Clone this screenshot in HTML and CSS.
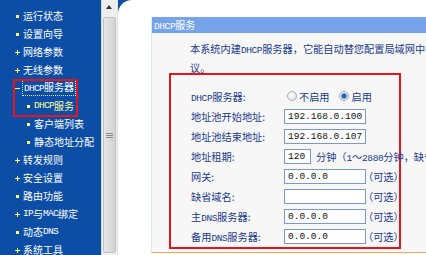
FILE: index.html
```html
<!DOCTYPE html>
<html lang="zh-CN">
  <head>
    <meta charset="UTF-8" />
    <meta name="viewport" content="width=device-width, initial-scale=1.0" />
    <title>DHCP服务</title>
    <link rel="stylesheet" href="styles.css">
  </head>
  <body>
    <div class="frame">
      <!-- Left menu -->
      <nav class="menu">
        <a class="item" href="#"><i class="ic dot"></i>运行状态</a>
        <a class="item" href="#"><i class="ic dot"></i>设置向导</a>
        <a class="item" href="#"><i class="ic plus"></i>网络参数</a>
        <a class="item" href="#"><i class="ic plus"></i>无线参数</a>
        <div class="hl">
          <a class="item" href="#"><i class="ic minus"></i><span class="focus"><span class="en">DHCP</span>服务器</span></a>
          <a class="item sub current" href="#"><i class="ic dot"></i><span class="en">DHCP</span>服务</a>
        </div>
        <a class="item sub" href="#"><i class="ic dot"></i>客户端列表</a>
        <a class="item sub" href="#"><i class="ic dot"></i>静态地址分配</a>
        <a class="item" href="#"><i class="ic plus"></i>转发规则</a>
        <a class="item" href="#"><i class="ic plus"></i>安全设置</a>
        <a class="item" href="#"><i class="ic dot"></i>路由功能</a>
        <a class="item" href="#"><i class="ic plus"></i><span class="en">IP</span>与<span class="en">MAC</span>绑定</a>
        <a class="item" href="#"><i class="ic dot"></i>动态<span class="en">DNS</span></a>
        <a class="item" href="#"><i class="ic plus"></i>系统工具</a>
      </nav>

      <div class="scrollbar">
        <div class="sb-up"></div>
        <div class="sb-thumb"><span class="grip"></span></div>
      </div>

      <!-- Main content -->
      <div class="main">
        <div class="page">
          <div class="panel">
            <div class="panel-title"><span class="en">DHCP</span>服务</div>
            <div class="panel-body">
              <p class="intro">本系统内建<span class="en">DHCP</span>服务器，它能自动替您配置局域网中各计算机的<span class="en">TCP/IP</span>协<br>议。</p>

              <div class="form-box">
                <div class="row">
                  <label class="label"><span class="en">DHCP</span>服务器:</label>
                  <span class="radio"></span><span class="opt">不启用</span>
                  <span class="radio checked"></span><span class="opt">启用</span>
                </div>
                <div class="row">
                  <label class="label">地址池开始地址:</label>
                  <span class="input">192.168.0.100</span>
                </div>
                <div class="row">
                  <label class="label">地址池结束地址:</label>
                  <span class="input">192.168.0.107</span>
                </div>
                <div class="row">
                  <label class="label">地址租期:</label>
                  <span class="input short">120</span>
                  <span class="hint">分钟（<span class="en">1</span>～<span class="en">2880</span>分钟，缺省值为<span class="en">120</span>分钟）</span>
                </div>
                <div class="row">
                  <label class="label">网关:</label>
                  <span class="input">0.0.0.0</span>
                  <span class="note">（可选）</span>
                </div>
                <div class="row">
                  <label class="label">缺省域名:</label>
                  <span class="input"></span>
                  <span class="note">（可选）</span>
                </div>
                <div class="row">
                  <label class="label">主<span class="en">DNS</span>服务器:</label>
                  <span class="input">0.0.0.0</span>
                  <span class="note">（可选）</span>
                </div>
                <div class="row">
                  <label class="label">备用<span class="en">DNS</span>服务器:</label>
                  <span class="input">0.0.0.0</span>
                  <span class="note">（可选）</span>
                </div>
              </div>
            </div>
          </div>
        </div>
      </div>
    </div>
  </body>
</html>
```

FILE: styles.css
```css
:root {
  --menu-blue: #0c4ea6;
  --text-navy: #1a3a8a;
  --mark: #ffff66;
  --red: #e8141c;
}

* {
  margin: 0;
  padding: 0;
  box-sizing: border-box;
}

body {
  font-family: "Noto Sans CJK SC", "Noto Sans", sans-serif;
  overflow: hidden;
  background: white;
}

.frame {
  display: flex;
  width: 426px;
  height: 255px;
  overflow: hidden;
}

/* Latin runs use a narrow monospace face, like the bitmap font */
.en {
  font-family: "Liberation Mono", monospace;
  font-size: 9.5px;
  letter-spacing: -0.4px;
}

/* Menu */
.menu {
  width: 101px;
  flex-shrink: 0;
  background: var(--menu-blue);
  padding-top: 7px;
}

.item {
  display: flex;
  align-items: center;
  height: 18px;
  color: white;
  font-size: 10px;
  line-height: 18px;
  text-decoration: none;
  white-space: nowrap;
}

.menu .en {
  font-size: 9.5px;
  letter-spacing: -0.7px;
}

.item.current {
  color: #ffff99;
}

.ic {
  width: 5px;
  height: 5px;
  margin: 0 3px 0 15px;
  flex-shrink: 0;
}

.sub .ic {
  margin-left: 26px;
}

.ic.dot {
  background: radial-gradient(circle, var(--mark) 1.6px, transparent 1.8px);
}

.ic.plus {
  background:
    linear-gradient(var(--mark), var(--mark)) center / 5px 1px no-repeat,
    linear-gradient(var(--mark), var(--mark)) center / 1px 5px no-repeat;
}

.ic.minus {
  background: linear-gradient(var(--mark), var(--mark)) center / 5px 1px no-repeat;
}

.focus {
  outline: 1px dotted #d8e4ff;
  outline-offset: 0;
  line-height: 12px;
  padding: 0 1px;
}

.hl {
  position: relative;
}

.hl::after {
  content: "";
  position: absolute;
  left: 13px;
  top: 0;
  width: 61px;
  height: 34px;
  border: 2px solid var(--red);
}

/* Scrollbar */
.scrollbar {
  width: 17px;
  flex-shrink: 0;
  display: flex;
  flex-direction: column;
  background: #eeeeee;
  border-left: 1px solid #d6d6d6;
  border-right: 1px solid #e4e4e4;
}

.sb-up {
  height: 16px;
  position: relative;
}

.sb-up::before {
  content: "";
  position: absolute;
  left: 4px;
  top: 5px;
  border-left: 3px solid transparent;
  border-right: 3px solid transparent;
  border-bottom: 4px solid #333;
}

.sb-thumb {
  flex: 1;
  margin: 1px 1px 2px;
  background: linear-gradient(to right, #e6e6e6, #d2d2d2);
  border: 1px solid #c2c2c2;
  border-radius: 2px;
  display: flex;
  align-items: center;
  justify-content: center;
}

.grip {
  width: 7px;
  height: 5px;
  background: repeating-linear-gradient(#8a8a8a 0 1px, transparent 1px 2px);
}

/* Main area */
.main {
  flex: 1;
  background: var(--menu-blue);
  overflow: hidden;
}

.page {
  height: 100%;
  background: white;
  border-top-left-radius: 14px;
  padding: 17px 0 0 33px;
}

.panel {
  width: 420px;
  background: #f7f7f7;
  border-left: 1px solid #e2e6ee;
  border-bottom: 1px solid #f3a65a;
}

.panel-title {
  height: 16px;
  line-height: 16px;
  background: #77a3ea;
  color: white;
  font-size: 10px;
  padding-left: 2px;
}

.panel-body {
  padding: 7px 0 3px 17px;
  color: var(--text-navy);
  font-size: 10.2px;
}

.intro {
  line-height: 17px;
  padding-left: 21px;
  white-space: nowrap;
}

.form-box {
  width: 232px;
  margin-top: -3px;
  border: 2px solid var(--red);
  padding: 11px 0 1px 20px;
  white-space: nowrap;
}

.row {
  display: flex;
  align-items: center;
  height: 20px;
}

.label {
  width: 93px;
  flex-shrink: 0;
}

.radio {
  width: 10px;
  height: 10px;
  border-radius: 50%;
  margin: 0 1px 0 3px;
  border: 1px solid #a4acb8;
  background: radial-gradient(circle at 40% 35%, #ffffff, #d8dce2);
  flex-shrink: 0;
}

.radio.checked {
  margin-left: 9px;
  background:
    radial-gradient(circle, #2a60c8 2px, #6f9ae0 2.6px, transparent 3.2px),
    radial-gradient(circle at 40% 35%, #ffffff, #d8dce2);
}

.opt {
  margin-left: 1px;
}

.radio.checked + .opt {
  margin-left: 2px;
}

.input {
  width: 82px;
  height: 15px;
  flex-shrink: 0;
  background: white;
  border: 1px solid #7b98c8;
  font-family: "Liberation Mono", monospace;
  font-size: 9.5px;
  line-height: 13px;
  color: #111;
  padding-left: 3px;
}

.input.short {
  width: 27px;
}

.hint {
  margin-left: 5px;
}

.note {
  margin-left: -3px;
}
```
